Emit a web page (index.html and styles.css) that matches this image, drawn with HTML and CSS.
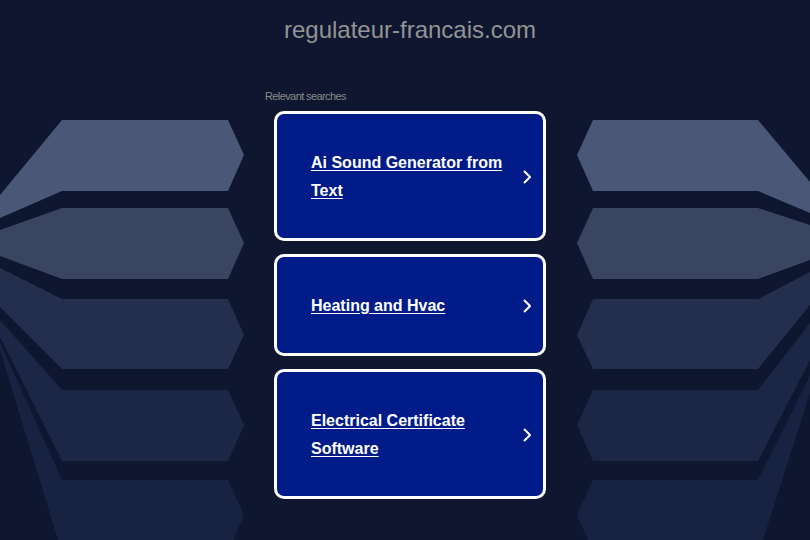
FILE: index.html
```html
<!DOCTYPE html>
<html lang="en">
<head>
<meta charset="utf-8">
<title>regulateur-francais.com</title>
<link rel="stylesheet" href="styles.css">
</head>
<body>
<header class="top">
  <h1 class="domain">regulateur-francais.com</h1>
</header>
<div class="stage">
  <svg class="art art-left" width="265" height="452" viewBox="0 88 265 452" aria-hidden="true">
    <polygon fill="#4b5777" points="62,120 228,120 244,155 228,191 62,191 0,218 0,195"/>
    <polygon fill="#3a4562" points="62,208 228,208 244,243 228,279 62,279 0,256 0,230"/>
    <polygon fill="#242f4e" points="62,299 228,299 244,335 228,369 62,369 0,307 0,268"/>
    <polygon fill="#1c2745" points="62,390 228,390 244,425 228,461 62,461 0,337 0,320"/>
    <polygon fill="#182341" points="62,480 228,480 244,515 233,540 58,540 0,350 0,342"/>
  </svg>
  <main class="searches">
    <p class="label">Relevant searches</p>
    <a class="card" href="#">
      <span class="card-text">Ai Sound Generator from Text</span>
      <svg class="chev" width="8" height="14" viewBox="0 0 8 14" aria-hidden="true"><polyline points="1,1 7,7 1,13" fill="none" stroke="#fff" stroke-width="2"/></svg>
    </a>
    <a class="card" href="#">
      <span class="card-text">Heating and Hvac</span>
      <svg class="chev" width="8" height="14" viewBox="0 0 8 14" aria-hidden="true"><polyline points="1,1 7,7 1,13" fill="none" stroke="#fff" stroke-width="2"/></svg>
    </a>
    <a class="card" href="#">
      <span class="card-text">Electrical Certificate Software</span>
      <svg class="chev" width="8" height="14" viewBox="0 0 8 14" aria-hidden="true"><polyline points="1,1 7,7 1,13" fill="none" stroke="#fff" stroke-width="2"/></svg>
    </a>
  </main>
  <svg class="art art-right" width="255" height="452" viewBox="555 88 255 452" aria-hidden="true">
    <polygon fill="#4b5777" points="593,120 758,120 810,182 810,213 758,191 593,191 577,155"/>
    <polygon fill="#3a4562" points="593,208 758,208 810,225 810,260 758,279 593,279 577,243"/>
    <polygon fill="#242f4e" points="593,299 758,299 810,272 810,305 758,369 593,369 577,335"/>
    <polygon fill="#1c2745" points="593,390 758,390 810,323 810,360 758,461 593,461 577,425"/>
    <polygon fill="#182341" points="593,480 758,480 810,375 810,393 763,540 588,540 577,515"/>
  </svg>
</div>
</body>
</html>
```
FILE: styles.css
```css
html, body {
  margin: 0;
  padding: 0;
  height: 540px;
  overflow: hidden;
  background: #0e172f;
  font-family: "Liberation Sans", Arial, sans-serif;
}

.top {
  height: 88px;
  box-sizing: border-box;
  padding-top: 16px;
}

.domain {
  margin: 0;
  text-align: center;
  font-size: 24px;
  line-height: 28px;
  font-weight: normal;
  color: #949494;
  padding-left: 10px;
}

.stage {
  display: grid;
  grid-template-columns: 265px 290px 1fr;
  align-items: start;
}

.art {
  display: block;
}

.searches {
  display: flex;
  flex-direction: column;
}

.label {
  margin: 0;
  font-size: 11px;
  line-height: 16px;
  letter-spacing: -0.6px;
  color: #8a8a8a;
}

.card {
  display: flex;
  align-items: center;
  margin: 7px 9px 6px;
  padding: 35px 12px 33px 34px;
  border: 3px solid #ffffff;
  border-radius: 10px;
  background: #011b89;
  color: #ffffff;
  text-decoration: none;
}

.card-text {
  flex: 1;
  margin-right: 12px;
  font-size: 16px;
  line-height: 28px;
  font-weight: bold;
  text-decoration: underline;
  text-underline-offset: 2px;
}

.chev {
  flex: none;
  display: block;
}
```
